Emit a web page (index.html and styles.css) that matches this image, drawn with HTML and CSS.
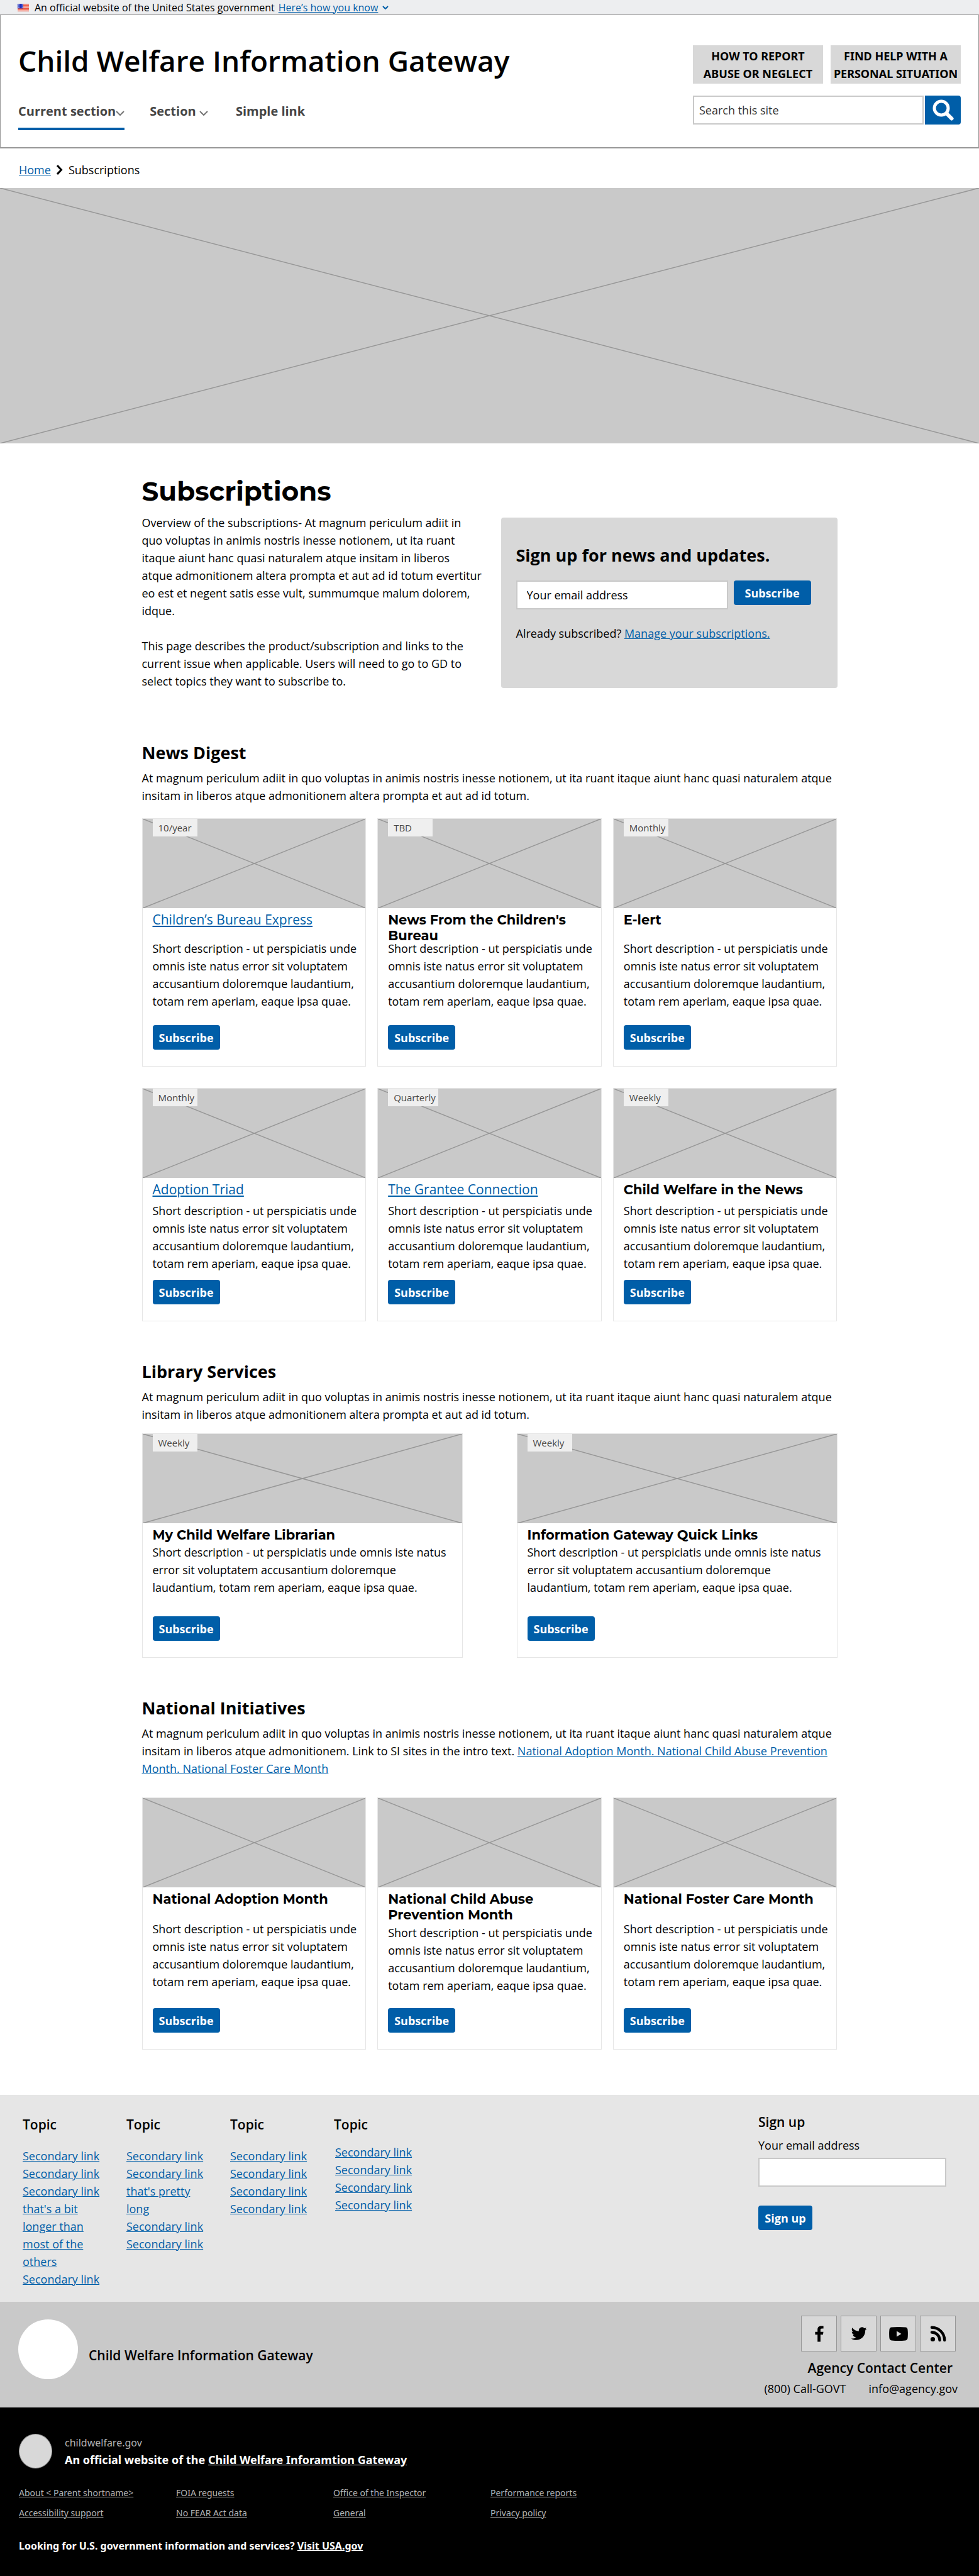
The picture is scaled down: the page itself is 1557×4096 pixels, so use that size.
FILE: index.html
```
<!DOCTYPE html>
<html lang="en">
<head>
<meta charset="utf-8">
<meta name="viewport" content="width=device-width, initial-scale=1">
<title>Subscriptions | Child Welfare Information Gateway</title>
<link rel="stylesheet" href="styles.css">
</head>
<body>
<div class="gov-banner">
  <svg class="gov-flag" width="18" height="12" viewBox="0 0 18 12" aria-hidden="true"><path fill="#fff" d="M0 0h18v12H0z"/><path stroke="#e31d00" stroke-width="1.1" d="M0 .6h18M0 2.8h18M0 5h18M0 7.2h18M0 9.3h18M0 11.4h18"/><path fill="#1b2bbb" d="M0 0h9v7.4H0z"/><path stroke="#fff" stroke-width=".9" stroke-dasharray="1 1" d="M1 1.8h7M1 3.8h7M1 5.8h7"/></svg>
  <span>An official website of the United States government</span>
  <a href="#">Here’s how you know</a>
  <svg width="10" height="6" viewBox="0 0 10 6" fill="none" stroke="#005ea8" stroke-width="2" aria-hidden="true"><path d="M1 1l4 4 4-4"/></svg>
</div>

<header class="site-header">
  <div class="site-brand">
    <div class="site-title">Child Welfare Information Gateway</div>
    <nav class="site-nav" aria-label="Main">
      <a class="nav-current" href="#">Current section<svg width="14" height="8" viewBox="0 0 14 8" aria-hidden="true"><path d="M1 1l6 6 6-6"/></svg></a>
      <a class="nav-menu" href="#">Section <svg width="14" height="8" viewBox="0 0 14 8" aria-hidden="true"><path d="M1 1l6 6 6-6"/></svg></a>
      <a href="#">Simple link</a>
    </nav>
  </div>
  <div class="site-tools">
    <div class="help-buttons">
      <button type="button">HOW TO REPORT<br>ABUSE OR NEGLECT</button>
      <button type="button">FIND HELP WITH A<br>PERSONAL SITUATION</button>
    </div>
    <form class="search">
      <input type="search" aria-label="Search this site" placeholder="Search this site">
      <button type="submit" aria-label="Search"><svg width="34" height="34" viewBox="0 0 34 34" fill="none" stroke="#fff" aria-hidden="true"><circle cx="14" cy="14" r="11" stroke-width="5"/><path d="M23 23l7.500 7.500" stroke-width="6" stroke-linecap="round"/></svg></button>
    </form>
  </div>
</header>

<nav class="breadcrumb" aria-label="Breadcrumb">
  <a href="#">Home</a>
  <svg width="10" height="16" viewBox="0 0 10 16" fill="none" stroke="#000" stroke-width="3" aria-hidden="true"><path d="M1 1l6.500 7L1 15"/></svg>
  <span>Subscriptions</span>
</nav>

<svg class="hero placeholder" viewBox="0 0 100 100" preserveAspectRatio="none" aria-hidden="true"><path d="M0 0l100 100M0 100L100 0"/></svg>

<main class="content">
  <section class="intro">
    <div class="intro-text">
      <h1>Subscriptions</h1>
      <p>Overview of the subscriptions- At magnum periculum adiit in quo voluptas in animis nostris inesse notionem, ut ita ruant itaque aiunt hanc quasi naturalem atque insitam in liberos atque admonitionem altera prompta et aut ad id totum evertitur eo est et negent satis esse vult, summumque malum dolorem, idque.</p>
      <p>This page describes the product/subscription and links to the current issue when applicable. Users will need to go to GD to select topics they want to subscribe to.</p>
    </div>
    <form class="signup-panel">
      <h2>Sign up for news and updates.</h2>
      <div class="signup-row">
        <input type="email" aria-label="Your email address" placeholder="Your email address">
        <button class="btn btn-wide" type="submit">Subscribe</button>
      </div>
      <p>Already subscribed? <a href="#">Manage your subscriptions.</a></p>
    </form>
  </section>

  <section class="topic topic-first">
    <h2>News Digest</h2>
    <p class="topic-intro">At magnum periculum adiit in quo voluptas in animis nostris inesse notionem, ut ita ruant itaque aiunt hanc quasi naturalem atque insitam in liberos atque admonitionem altera prompta et aut ad id totum.</p>
    <div class="cards cards-tall">
      <article class="card">
        <svg class="placeholder" viewBox="0 0 100 100" preserveAspectRatio="none" aria-hidden="true"><path d="M0 0l100 100M0 100L100 0"/></svg>
        <span class="tag">10/year</span>
        <h3><a href="#">Children’s Bureau Express</a></h3>
        <p>Short description - ut perspiciatis unde omnis iste natus error sit voluptatem accusantium doloremque laudantium, totam rem aperiam, eaque ipsa quae.</p>
        <button class="btn" type="button">Subscribe</button>
      </article>
      <article class="card">
        <svg class="placeholder" viewBox="0 0 100 100" preserveAspectRatio="none" aria-hidden="true"><path d="M0 0l100 100M0 100L100 0"/></svg>
        <span class="tag">TBD</span>
        <h3>News From the Children's Bureau</h3>
        <p>Short description - ut perspiciatis unde omnis iste natus error sit voluptatem accusantium doloremque laudantium, totam rem aperiam, eaque ipsa quae.</p>
        <button class="btn" type="button">Subscribe</button>
      </article>
      <article class="card">
        <svg class="placeholder" viewBox="0 0 100 100" preserveAspectRatio="none" aria-hidden="true"><path d="M0 0l100 100M0 100L100 0"/></svg>
        <span class="tag">Monthly</span>
        <h3>E-lert</h3>
        <p>Short description - ut perspiciatis unde omnis iste natus error sit voluptatem accusantium doloremque laudantium, totam rem aperiam, eaque ipsa quae.</p>
        <button class="btn" type="button">Subscribe</button>
      </article>
    </div>
    <div class="cards cards-short">
      <article class="card">
        <svg class="placeholder" viewBox="0 0 100 100" preserveAspectRatio="none" aria-hidden="true"><path d="M0 0l100 100M0 100L100 0"/></svg>
        <span class="tag">Monthly</span>
        <h3><a href="#">Adoption Triad</a></h3>
        <p>Short description - ut perspiciatis unde omnis iste natus error sit voluptatem accusantium doloremque laudantium, totam rem aperiam, eaque ipsa quae.</p>
        <button class="btn" type="button">Subscribe</button>
      </article>
      <article class="card">
        <svg class="placeholder" viewBox="0 0 100 100" preserveAspectRatio="none" aria-hidden="true"><path d="M0 0l100 100M0 100L100 0"/></svg>
        <span class="tag">Quarterly</span>
        <h3><a href="#">The Grantee Connection</a></h3>
        <p>Short description - ut perspiciatis unde omnis iste natus error sit voluptatem accusantium doloremque laudantium, totam rem aperiam, eaque ipsa quae.</p>
        <button class="btn" type="button">Subscribe</button>
      </article>
      <article class="card">
        <svg class="placeholder" viewBox="0 0 100 100" preserveAspectRatio="none" aria-hidden="true"><path d="M0 0l100 100M0 100L100 0"/></svg>
        <span class="tag">Weekly</span>
        <h3>Child Welfare in the News</h3>
        <p>Short description - ut perspiciatis unde omnis iste natus error sit voluptatem accusantium doloremque laudantium, totam rem aperiam, eaque ipsa quae.</p>
        <button class="btn" type="button">Subscribe</button>
      </article>
    </div>
  </section>

  <section class="topic">
    <h2>Library Services</h2>
    <p class="topic-intro topic-intro-tight">At magnum periculum adiit in quo voluptas in animis nostris inesse notionem, ut ita ruant itaque aiunt hanc quasi naturalem atque insitam in liberos atque admonitionem altera prompta et aut ad id totum.</p>
    <div class="cards cards-pair">
      <article class="card">
        <svg class="placeholder" viewBox="0 0 100 100" preserveAspectRatio="none" aria-hidden="true"><path d="M0 0l100 100M0 100L100 0"/></svg>
        <span class="tag">Weekly</span>
        <h3>My Child Welfare Librarian</h3>
        <p>Short description - ut perspiciatis unde omnis iste natus error sit voluptatem accusantium doloremque laudantium, totam rem aperiam, eaque ipsa quae.</p>
        <button class="btn" type="button">Subscribe</button>
      </article>
      <article class="card">
        <svg class="placeholder" viewBox="0 0 100 100" preserveAspectRatio="none" aria-hidden="true"><path d="M0 0l100 100M0 100L100 0"/></svg>
        <span class="tag">Weekly</span>
        <h3>Information Gateway Quick Links</h3>
        <p>Short description - ut perspiciatis unde omnis iste natus error sit voluptatem accusantium doloremque laudantium, totam rem aperiam, eaque ipsa quae.</p>
        <button class="btn" type="button">Subscribe</button>
      </article>
    </div>
  </section>

  <section class="topic">
    <h2>National Initiatives</h2>
    <p class="topic-intro topic-intro-loose">At magnum periculum adiit in quo voluptas in animis nostris inesse notionem, ut ita ruant itaque aiunt hanc quasi naturalem atque insitam in liberos atque admonitionem. Link to SI sites in the intro text. <a href="#">National Adoption Month. National Child Abuse Prevention Month. National Foster Care Month</a></p>
    <div class="cards cards-national">
      <article class="card">
        <svg class="placeholder" viewBox="0 0 100 100" preserveAspectRatio="none" aria-hidden="true"><path d="M0 0l100 100M0 100L100 0"/></svg>
        <h3>National Adoption Month</h3>
        <p>Short description - ut perspiciatis unde omnis iste natus error sit voluptatem accusantium doloremque laudantium, totam rem aperiam, eaque ipsa quae.</p>
        <button class="btn" type="button">Subscribe</button>
      </article>
      <article class="card">
        <svg class="placeholder" viewBox="0 0 100 100" preserveAspectRatio="none" aria-hidden="true"><path d="M0 0l100 100M0 100L100 0"/></svg>
        <h3>National Child Abuse Prevention Month</h3>
        <p>Short description - ut perspiciatis unde omnis iste natus error sit voluptatem accusantium doloremque laudantium, totam rem aperiam, eaque ipsa quae.</p>
        <button class="btn" type="button">Subscribe</button>
      </article>
      <article class="card">
        <svg class="placeholder" viewBox="0 0 100 100" preserveAspectRatio="none" aria-hidden="true"><path d="M0 0l100 100M0 100L100 0"/></svg>
        <h3>National Foster Care Month</h3>
        <p>Short description - ut perspiciatis unde omnis iste natus error sit voluptatem accusantium doloremque laudantium, totam rem aperiam, eaque ipsa quae.</p>
        <button class="btn" type="button">Subscribe</button>
      </article>
    </div>
  </section>
</main>

<footer>
  <div class="footer-links">
    <div class="footer-topics">
      <section>
        <h4>Topic</h4>
        <ul>
          <li><a href="#">Secondary link</a></li>
          <li><a href="#">Secondary link</a></li>
          <li><a href="#">Secondary link that's a bit longer than most of the others</a></li>
          <li><a href="#">Secondary link</a></li>
        </ul>
      </section>
      <section>
        <h4>Topic</h4>
        <ul>
          <li><a href="#">Secondary link</a></li>
          <li><a href="#">Secondary link that's pretty long</a></li>
          <li><a href="#">Secondary link</a></li>
          <li><a href="#">Secondary link</a></li>
        </ul>
      </section>
      <section>
        <h4>Topic</h4>
        <ul>
          <li><a href="#">Secondary link</a></li>
          <li><a href="#">Secondary link</a></li>
          <li><a href="#">Secondary link</a></li>
          <li><a href="#">Secondary link</a></li>
        </ul>
      </section>
      <section class="topic-last">
        <h4>Topic</h4>
        <ul>
          <li><a href="#">Secondary link</a></li>
          <li><a href="#">Secondary link</a></li>
          <li><a href="#">Secondary link</a></li>
          <li><a href="#">Secondary link</a></li>
        </ul>
      </section>
    </div>
    <form class="footer-signup">
      <h4>Sign up</h4>
      <label for="footer-email">Your email address</label>
      <input id="footer-email" type="email">
      <button class="btn btn-small" type="submit">Sign up</button>
    </form>
  </div>

  <div class="footer-agency">
    <div class="agency-brand"><span class="agency-logo"></span><span class="agency-name">Child Welfare Information Gateway</span></div>
    <div class="agency-contact">
      <div class="social">
        <a href="#" aria-label="Facebook"><svg width="14" height="26" viewBox="0 0 14 26" aria-hidden="true"><path d="M4.200 25.500V14.200H.4V9.700h3.800V6.200C4.200 2.500 6.300.4 9.700.4h3.900v4h-2.400c-1.800 0-2.300.8-2.300 2.100v3.200h4.600l-.6 4.500h-4v11.300z"/></svg></a>
        <a href="#" aria-label="Twitter"><svg width="26" height="22" viewBox="0 0 26 22" aria-hidden="true"><path d="M25.600 2.900c-.9.400-1.900.7-2.900.8 1-.6 1.800-1.600 2.200-2.800-1 .6-2.100 1-3.200 1.200A5.100 5.100 0 0 0 13 6.800C8.700 6.600 5 4.500 2.400 1.300c-1.300 2.300-.7 5.300 1.600 6.900-.8 0-1.600-.3-2.300-.6 0 2.500 1.700 4.600 4.100 5.100-.7.200-1.500.2-2.300.1.600 2 2.500 3.500 4.800 3.600A10.400 10.400 0 0 1 .7 18.500C3 20 5.700 20.800 8.600 20.800c9.500 0 15-8.100 14.500-15.400 1-.7 1.900-1.600 2.500-2.500z"/></svg></a>
        <a href="#" aria-label="YouTube"><svg width="30" height="22" viewBox="0 0 30 22" aria-hidden="true"><path fill-rule="evenodd" d="M4 .6Q15-.4 26 .6q3 .4 3.500 3.400.8 7 0 14-.5 3-3.500 3.400-11 1-22 0Q1 21 .5 18-.3 11 .5 4 1 1 4 .6zM12 6.500v9l7.500-4.500z"/></svg></a>
        <a href="#" aria-label="RSS feed"><svg width="26" height="26" viewBox="0 0 26 26" aria-hidden="true"><circle cx="4.500" cy="21.500" r="3.600"/><path fill="none" stroke="#000" stroke-width="4.400" stroke-linecap="round" d="M3 10.500A12.500 12.500 0 0 1 15.500 23M3 2.800A20.200 20.200 0 0 1 23.200 23"/></svg></a>
      </div>
      <h4>Agency Contact Center</h4>
      <p><span>(800) Call-GOVT</span><span>info@agency.gov</span></p>
    </div>
  </div>

  <div class="footer-gov">
    <div class="gov-identity">
      <span class="gov-logo"></span>
      <div>
        <div class="gov-domain">childwelfare.gov</div>
        <div class="gov-parent">An official website of the <a href="#">Child Welfare Inforamtion Gateway</a></div>
      </div>
    </div>
    <ul class="gov-links">
      <li><a href="#">About &lt; Parent shortname&gt;</a></li>
      <li><a href="#">FOIA reguests</a></li>
      <li><a href="#">Office of the Inspector</a></li>
      <li><a href="#">Performance reports</a></li>
      <li><a href="#">Accessibility support</a></li>
      <li><a href="#">No FEAR Act data</a></li>
      <li><a href="#">General</a></li>
      <li><a href="#">Privacy policy</a></li>
    </ul>
    <p class="gov-usa">Looking for U.S. government information and services? <a href="#">Visit USA.gov</a></p>
  </div>
</footer>
</body>
</html>
```
FILE: styles.css
```
* { box-sizing: border-box; }

body {
  margin: 0;
  background: #fff;
  color: #000;
  font-family: "Open Sans", "Noto Sans", sans-serif;
  font-size: 18px;
  line-height: 28px;
}

h1, h2, h3, h4, p, ul { margin: 0; padding: 0; }
ul { list-style: none; }
a { color: #005ea8; }
button, input { font: inherit; color: inherit; }
svg { flex: none; }

.placeholder {
  display: block;
  width: 100%;
  background: #c9c9c9;
  fill: none;
  stroke: #979797;
  stroke-width: 1.5;
}
.placeholder path { vector-effect: non-scaling-stroke; }

/* Government banner */
.gov-banner {
  display: flex;
  align-items: center;
  height: 24px;
  padding: 0 28px;
  background: #edeef0;
  border-bottom: 1px solid #979797;
  font-size: 16px;
  line-height: 22px;
}
.gov-flag { margin-right: 9px; }
.gov-banner a { margin: 0 7px 0 6px; }

/* Header */
.site-header {
  display: flex;
  justify-content: space-between;
  height: 212px;
  padding: 48px 28px 0;
  border: 1px solid #979797;
  border-top: 0;
  border-bottom-width: 2px;
}
.site-title {
  font-size: 46px;
  line-height: 48px;
  font-weight: 600;
}
.site-nav {
  display: flex;
  margin-top: 41px;
  color: #454545;
  font-size: 20px;
  line-height: 32px;
  font-weight: 700;
}
.site-nav a { color: inherit; text-decoration: none; }
.site-nav svg { fill: none; stroke: #757575; stroke-width: 2; }
.nav-current { padding-bottom: 10px; border-bottom: 4px solid #005ea8; }
.nav-menu { margin: 0 44px 0 40px; }
.help-buttons { display: flex; gap: 12px; }
.help-buttons button {
  width: 207px;
  height: 61px;
  padding: 0;
  border: 0;
  background: #d8d8d8;
  font-family: "Noto Sans", sans-serif;
  font-weight: 700;
  white-space: nowrap;
}
.search { display: flex; gap: 2px; margin-top: 19px; }
.search input {
  flex: 1;
  min-width: 0;
  height: 46px;
  padding: 0 8px;
  border: 2px solid #c9c9c9;
}
.search input::placeholder { color: #333; opacity: 1; }
.search button {
  display: flex;
  align-items: center;
  justify-content: center;
  width: 57px;
  height: 46px;
  padding: 0;
  border: 0;
  border-radius: 0 4px 4px 0;
  background: #005ea8;
}

.breadcrumb {
  display: flex;
  align-items: center;
  gap: 9px;
  height: 63px;
  padding: 4px 30px 0;
}

.hero { height: 406px; }

/* Main column */
.content {
  max-width: 1106px;
  margin: 0 auto;
  padding: 48px 0 72px;
}
h1 {
  font-family: Montserrat, Inter, sans-serif;
  font-size: 42px;
  line-height: 56px;
  font-weight: 700;
}
h2 { font-size: 27px; line-height: 36px; font-weight: 700; }

.intro { display: flex; justify-content: space-between; align-items: flex-end; }
.intro-text { width: 542px; }
.intro-text h1 { margin-bottom: 8px; }
.intro-text p + p { margin-top: 28px; }
.signup-panel {
  width: 535px;
  height: 271px;
  margin-bottom: 3px;
  padding: 42px 24px;
  border-radius: 4px;
  background: #d8d8d8;
}
.signup-row { display: flex; gap: 9px; margin: 22px 0 24px; }
.signup-row input {
  width: 337px;
  height: 46px;
  padding: 0 15px;
  border: 2px solid #c9c9c9;
}
.signup-row input::placeholder { color: #000; opacity: 1; }

.btn {
  width: 107px;
  height: 39px;
  padding: 0;
  border: 0;
  border-radius: 4px;
  background: #005ea8;
  color: #fff;
  font-weight: 700;
}
.btn-wide { width: 123px; }
.btn-small { width: 86px; }

.topic { margin-top: 62px; }
.topic-first { margin-top: 82px; }
.topic h2 { margin-bottom: 8px; }
.topic-intro { margin-bottom: 22px; }
.topic-intro-tight { margin-bottom: 16px; }
.topic-intro-loose { margin-bottom: 32px; }

.cards {
  display: grid;
  grid-template-columns: repeat(3, 1fr);
  gap: 18px;
}
.cards-pair { grid-template-columns: repeat(2, 1fr); gap: 86px; }
.cards + .cards { margin-top: 34px; }

.card {
  position: relative;
  display: flex;
  flex-direction: column;
  align-items: flex-start;
  border: 1px solid #e6e6e6;
  padding-bottom: 26px;
}
.card .placeholder { height: 142px; }
.card h3 {
  height: 50px;
  padding: 6px 16px 0;
  font-family: Montserrat, Inter, sans-serif;
  font-size: 21px;
  line-height: 25px;
  font-weight: 700;
}
.card h3 a {
  font-family: "Open Sans", "Noto Sans", sans-serif;
  font-weight: 400;
}
.card p { padding: 0 8px 0 16px; }
.card .btn { margin: 24px 0 0 16px; }
.cards-short h3 { height: 38px; }
.cards-short .btn { margin-top: 12px; }
.cards-pair h3 { height: 32px; }
.cards-pair .btn { margin-top: 32px; }
.cards-national h3 { height: auto; min-height: 52px; padding-bottom: 2px; }
.cards-national p { margin-bottom: 22px; }
.cards-national .btn { margin-top: auto; }

.tag {
  position: absolute;
  top: 0;
  left: 16px;
  min-width: 71px;
  height: 28px;
  padding: 0 4px 0 9px;
  background: #efefef;
  color: #454545;
  font-size: 15px;
}

/* Footer */
.footer-links {
  display: flex;
  justify-content: space-between;
  min-height: 329px;
  padding: 29px 52px 17px 36px;
  background: #e6e6e6;
}
h4 { font-size: 21px; line-height: 28px; font-weight: 600; }
.footer-topics { display: grid; grid-template-columns: repeat(4, 126px); gap: 39px; padding-top: 4px; }
.footer-topics ul { margin-top: 22px; }
.topic-last ul { margin: 16px 0 0 2px; }
.footer-signup { display: flex; flex-direction: column; align-items: flex-start; width: 299px; }
.footer-signup label { margin-top: 9px; }
.footer-signup input {
  width: 299px;
  height: 46px;
  margin: 6px 0 30px;
  border: 2px solid #c9c9c9;
}

.footer-agency {
  display: flex;
  justify-content: space-between;
  height: 168px;
  padding: 22px 34px 0 29px;
  background: #c9c9c9;
}
.agency-brand { display: flex; align-items: center; gap: 17px; height: 106px; font-size: 21px; font-weight: 600; }
.agency-logo { width: 95px; height: 95px; border-radius: 50%; background: #fff; }
.agency-name { padding-top: 20px; }
.agency-contact { display: flex; flex-direction: column; align-items: flex-end; }
.social { display: flex; gap: 6px; margin-right: 3px; }
.social a {
  display: flex;
  align-items: center;
  justify-content: center;
  width: 57px;
  height: 57px;
  border: 1px solid #979797;
  background: #d8d8d8;
}
.agency-contact h4 { margin: 12px 8px 5px; }
.agency-contact p span + span { margin-left: 36px; }

.footer-gov {
  padding: 42px 30px 34px;
  background: #000;
  color: #fff;
  font-family: "Noto Sans", sans-serif;
  font-size: 16px;
}
.gov-identity { display: flex; align-items: center; gap: 20px; line-height: 27px; }
.gov-logo { width: 53px; height: 55px; border: 1px solid #979797; border-radius: 50%; background: #d8d8d8; }
.gov-domain, .gov-links a { color: #b4b4b4; }
.gov-parent, .gov-usa { font-weight: 700; }
.gov-parent { font-size: 18px; }
.gov-parent a, .gov-usa a { color: inherit; }
.gov-links {
  display: grid;
  grid-template-columns: repeat(4, 250px);
  row-gap: 4px;
  margin-top: 25px;
  font-size: 14px;
}
.gov-usa { margin-top: 24px; }
```
